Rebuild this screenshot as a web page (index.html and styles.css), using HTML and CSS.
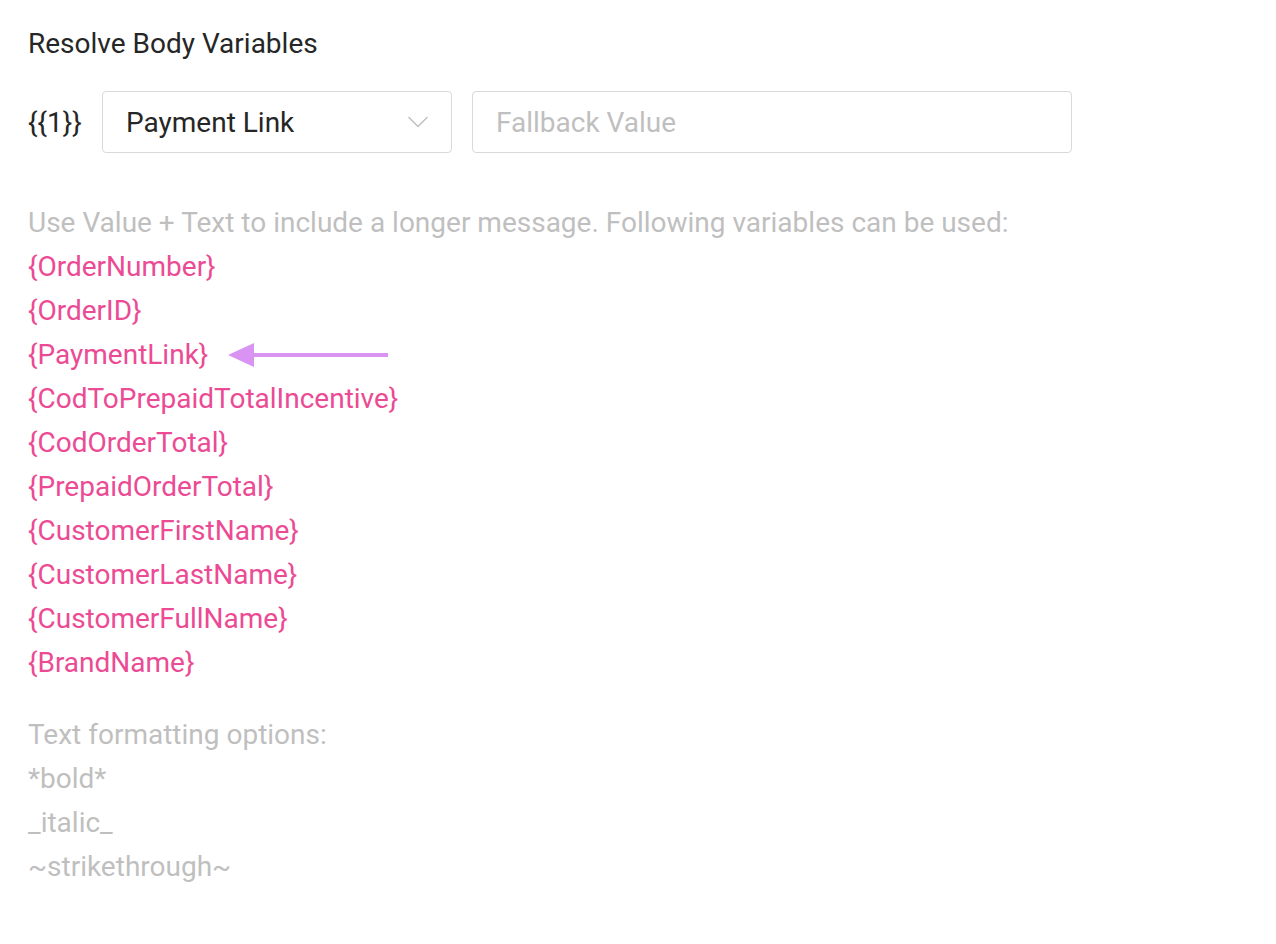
FILE: index.html
```html
<!DOCTYPE html>
<html>
<head>
<meta charset="utf-8">
<link rel="stylesheet" href="styles.css">
</head>
<body>
<div class="panel">
  <div class="title">Resolve Body Variables</div>
  <div class="var-row">
    <span class="var-label">{{1}}</span>
    <div class="select">
      <span class="select-value">Payment Link</span>
      <svg class="chev" width="22" height="14" viewBox="0 0 22 14"><path d="M1.5 2 L11 11.5 L20.5 2" fill="none" stroke="#bfbfbf" stroke-width="1.4"/></svg>
    </div>
    <div class="input"><span class="placeholder">Fallback Value</span></div>
  </div>
  <div class="help">
    <div class="muted">Use Value + Text to include a longer message. Following variables can be used:</div>
    <div class="pink">{OrderNumber}</div>
    <div class="pink">{OrderID}</div>
    <div class="pink with-arrow">{PaymentLink}
      <svg class="arrow" width="160" height="26" viewBox="0 0 160 26"><polygon points="0,13 26,1 26,25" fill="#d994f3"/><rect x="22" y="11" width="138" height="4" fill="#d994f3"/></svg>
    </div>
    <div class="pink">{CodToPrepaidTotalIncentive}</div>
    <div class="pink">{CodOrderTotal}</div>
    <div class="pink">{PrepaidOrderTotal}</div>
    <div class="pink">{CustomerFirstName}</div>
    <div class="pink">{CustomerLastName}</div>
    <div class="pink">{CustomerFullName}</div>
    <div class="pink">{BrandName}</div>
    <div class="muted gap">Text formatting options:</div>
    <div class="muted">*bold*</div>
    <div class="muted">_italic_</div>
    <div class="muted">~strikethrough~</div>
  </div>
</div>
</body>
</html>
```
FILE: styles.css
```css
html, body { margin: 0; padding: 0; background: #fff; }
body { font-family: Roboto, "Liberation Sans", sans-serif; }
.panel { padding: 26px 28px; }
.title { font-size: 28px; color: #262626; line-height: 36px; }
.var-row { display: flex; align-items: center; margin-top: 29px; }
.var-label { font-size: 28px; color: #262626; width: 74px; }
.select {
  width: 350px; height: 62px; box-sizing: border-box;
  border: 1px solid #d9d9d9; border-radius: 4px;
  display: flex; align-items: center; justify-content: space-between;
  padding: 0 22px 0 23px;
}
.select-value { font-size: 28px; color: #262626; }
.input {
  margin-left: 20px; width: 600px; height: 62px; box-sizing: border-box;
  border: 1px solid #d9d9d9; border-radius: 4px;
  display: flex; align-items: center; padding: 0 23px;
}
.placeholder { font-size: 28px; color: #bfbfbf; }
.help { margin-top: 48px; font-size: 28px; line-height: 44px; }
.muted { color: #bfbfbf; }
.pink { color: #eb4b94; }
.with-arrow { display: flex; align-items: center; }
.arrow { margin-left: 20px; }
.gap { margin-top: 28px; }
```
